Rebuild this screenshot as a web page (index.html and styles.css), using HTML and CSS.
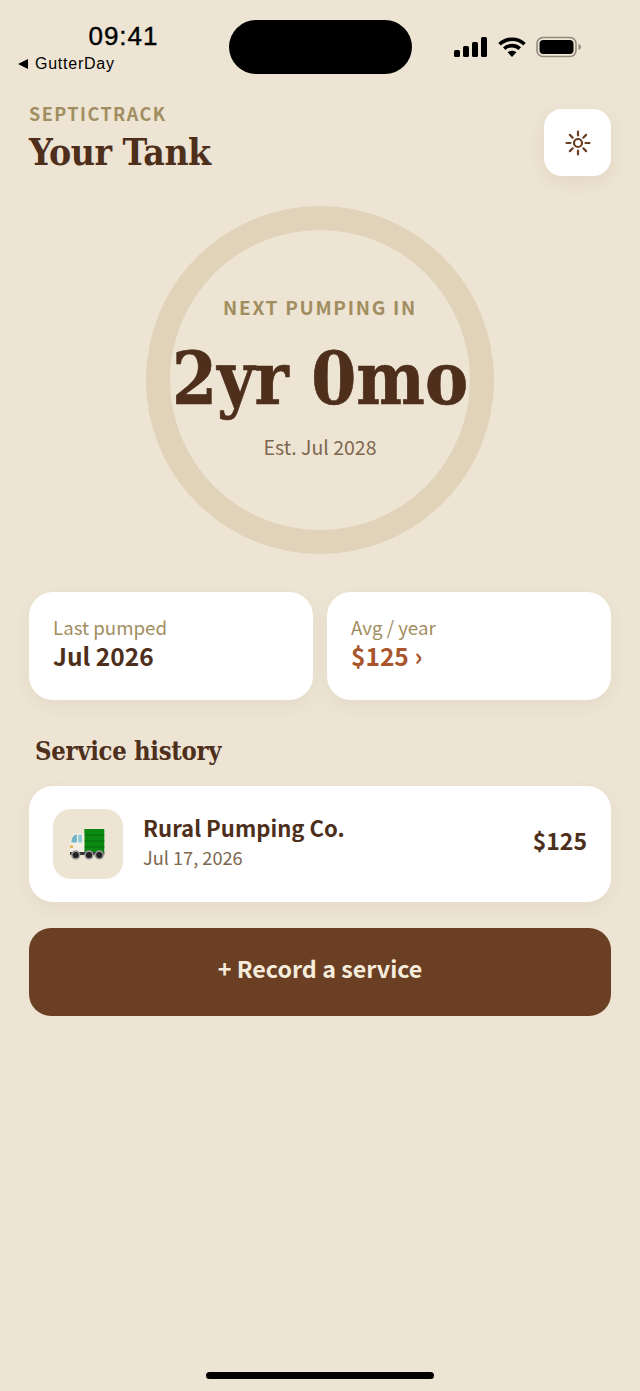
FILE: index.html
```html
<!DOCTYPE html>
<html lang="en">
<head>
  <meta charset="UTF-8">
  <meta name="viewport" content="width=device-width, initial-scale=1.0">
  <title>SepticTrack</title>
  <link rel="stylesheet" href="styles.css">
</head>
<body>
  <div class="app">
    <div class="status-bar">
      <div class="status-left">
        <div class="status-time">09:41</div>
        <div class="status-back"><span class="back-arrow"></span>GutterDay</div>
      </div>
      <div class="island"></div>
      <div class="status-right">
        <svg class="icon-signal" width="33" height="20" viewBox="0 0 33 20">
          <rect x="0" y="13" width="6" height="7" rx="1.5"/>
          <rect x="9" y="9" width="6" height="11" rx="1.5"/>
          <rect x="18" y="5" width="6" height="15" rx="1.5"/>
          <rect x="27" y="0" width="6" height="20" rx="1.5"/>
        </svg>
        <svg class="icon-wifi" width="28" height="20" viewBox="0 0 28 20" fill="none" stroke="#000" stroke-width="3.6">
          <path d="M1.5 7.2C8.5 .6 19.5 .6 26.5 7.2"/>
          <path d="M6.2 11.6C10.6 7.6 17.4 7.6 21.8 11.6"/>
          <path d="M14 20l-4.4-4.7c2.5-2 6.3-2 8.8 0z" fill="#000" stroke="none"/>
        </svg>
        <svg class="icon-battery" width="46" height="22" viewBox="0 0 46 22">
          <rect x="1" y="1.500" width="39" height="19" rx="6" fill="none" stroke="#8f8a7d" stroke-width="1.600"/>
          <rect x="3.500" y="4" width="34" height="14" rx="4" fill="#000"/>
          <path d="M42.500 8v6c1.500-.4 2.500-1.600 2.500-3s-1-2.600-2.500-3z" fill="#8f8a7d"/>
        </svg>
      </div>
    </div>

    <header class="page-head">
      <div>
        <div class="eyebrow">SEPTICTRACK</div>
        <h1 class="page-title">Your Tank</h1>
      </div>
      <button class="theme-btn">
        <svg width="28" height="28" viewBox="0 0 28 28" fill="none" stroke="#6b3f24" stroke-width="2.200" stroke-linecap="round">
          <circle cx="14" cy="14" r="4"/>
          <path d="M14 2.500v4M14 21.500v4M2.500 14h4M21.500 14h4M5.900 5.900l2.800 2.800M19.300 19.300l2.800 2.800M5.900 22.100l2.800-2.800M19.300 8.700l2.800-2.800"/>
        </svg>
      </button>
    </header>

    <section class="ring-wrap">
      <div class="ring">
        <div class="ring-label">NEXT PUMPING IN</div>
        <div class="ring-value">2yr 0mo</div>
        <div class="ring-est">Est. Jul 2028</div>
      </div>
    </section>

    <section class="stats">
      <div class="card stat">
        <div class="stat-label">Last pumped</div>
        <div class="stat-value">Jul 2026</div>
      </div>
      <div class="card stat">
        <div class="stat-label">Avg / year</div>
        <div class="stat-value accent">$125 ›</div>
      </div>
    </section>

    <h2 class="section-title">Service history</h2>

    <div class="card service-row">
      <div class="service-icon">
        <svg width="38" height="34" viewBox="0 0 38 34">
          <rect x="15.300" y="2" width="20" height="24" fill="#0b8a12"/>
          <path d="M15.300 8h20M15.300 14h20M15.300 20h20" stroke="#066a0c" stroke-width="1"/>
          <path d="M1 26v-10c0-6 3-10 7.500-10h6.800v20z" fill="#f3efe2"/>
          <path d="M2.400 15.500c0-4.500 1.800-7.500 5.500-8.300v8.300z" fill="#6fb4c8"/>
          <rect x="9.200" y="7.500" width="3.800" height="8" rx="1" fill="#8fcbd8"/>
          <rect x="1" y="18.500" width="3" height="2.500" fill="#e3b64c"/>
          <rect x="1" y="25" width="34.300" height="3" fill="#333"/>
          <g fill="#222" stroke="#9a9a9a" stroke-width="1.600">
            <circle cx="6.700" cy="28" r="3.900"/>
            <circle cx="20" cy="28" r="3.900"/>
            <circle cx="30.300" cy="28" r="3.900"/>
          </g>
        </svg>
      </div>
      <div class="service-info">
        <div class="service-name">Rural Pumping Co.</div>
        <div class="service-date">Jul 17, 2026</div>
      </div>
      <div class="service-cost">$125</div>
    </div>

    <button class="record-btn">+ Record a service</button>

    <div class="home-indicator"></div>
  </div>
</body>
</html>
```

FILE: styles.css
```css
* {
  box-sizing: border-box;
}
html, body {
  margin: 0;
  padding: 0;
  background: #ede4d3;
}
body {
  font-family: "Noto Sans CJK SC", "Noto Sans", sans-serif;
  color: #4d2f1b;
}
.app {
  width: 640px;
  height: 1391px;
  padding: 0 29px;
  position: relative;
  overflow: hidden;
}
.status-bar {
  display: flex;
  align-items: flex-start;
  height: 100px;
  margin: 0 -29px;
  padding: 20px 58px 0 18px;
  font-family: "Liberation Sans", sans-serif;
  color: #000;
}
.status-left {
  width: 211px;
}
.status-time {
  font-size: 26px;
  line-height: 32px;
  font-weight: 500;
  letter-spacing: 1px;
  text-align: center;
  -webkit-text-stroke: 0.4px #000;
}
.status-back {
  display: flex;
  align-items: center;
  font-size: 16px;
  line-height: 20px;
  margin-top: 2px;
  letter-spacing: 0.75px;
}
.back-arrow {
  width: 0;
  height: 0;
  margin-right: 7px;
  border-top: 5px solid transparent;
  border-bottom: 5px solid transparent;
  border-right: 10px solid #000;
}
.island {
  width: 183px;
  height: 54px;
  background: #000;
  border-radius: 27px;
}
.status-right {
  flex: 1;
  display: flex;
  align-items: center;
  justify-content: flex-end;
  gap: 10px;
  height: 54px;
  padding-bottom: 1px;
}
.icon-signal {
  margin-right: 1px;
}
.page-head {
  display: flex;
  justify-content: space-between;
  align-items: flex-start;
  height: 106px;
}
.eyebrow {
  font-size: 18px;
  line-height: 26px;
  font-weight: 700;
  letter-spacing: 1.45px;
  color: #a18e60;
}
.page-title {
  margin: 2px 0 0;
  font-family: "DejaVu Serif Condensed", "DejaVu Serif", serif;
  font-stretch: condensed;
  font-size: 37px;
  line-height: 48px;
  font-weight: 700;
  letter-spacing: -0.5px;
}
.theme-btn {
  width: 67px;
  height: 67px;
  margin-top: 9px;
  padding: 0;
  border: 0;
  border-radius: 18px;
  background: #fff;
  display: flex;
  align-items: center;
  justify-content: center;
  box-shadow: 0 6px 18px rgba(107, 63, 36, 0.07);
}
.ring-wrap {
  display: flex;
  justify-content: center;
  height: 386px;
}
.ring {
  width: 348px;
  height: 348px;
  border: 24px solid #e0d3b9;
  border-radius: 50%;
  display: flex;
  flex-direction: column;
  align-items: center;
  flex-shrink: 0;
  padding-top: 64px;
}
.ring-label {
  font-size: 19px;
  line-height: 26px;
  font-weight: 700;
  letter-spacing: 1.7px;
  color: #a18e60;
  white-space: nowrap;
}
.ring-value {
  margin-top: 17px;
  font-family: "DejaVu Serif Condensed", "DejaVu Serif", serif;
  font-stretch: condensed;
  font-size: 72px;
  line-height: 84px;
  font-weight: 700;
  white-space: nowrap;
  -webkit-text-stroke: 0.6px #4d2f1b;
}
.ring-est {
  margin-top: 13px;
  font-size: 19.5px;
  line-height: 26px;
  color: #7d674f;
}
.stats {
  display: flex;
  gap: 14px;
}
.card {
  background: #fff;
  box-shadow: 0 6px 18px rgba(107, 63, 36, 0.05);
}
.stat {
  flex: 1;
  height: 108px;
  border-radius: 24px;
  padding: 22px 24px;
}
.stat-label {
  font-size: 18.7px;
  line-height: 26px;
  color: #a18e60;
}
.stat-value {
  font-size: 24.500px;
  line-height: 32px;
  font-weight: 700;
}
.stat-value.accent {
  color: #a9562d;
}
.section-title {
  margin: 33px 0 16px 6px;
  font-family: "DejaVu Serif Condensed", "DejaVu Serif", serif;
  font-stretch: condensed;
  font-size: 25.4px;
  line-height: 37px;
  font-weight: 700;
  letter-spacing: -0.3px;
}
.service-row {
  display: flex;
  align-items: center;
  height: 116px;
  border-radius: 24px;
  padding: 0 24px;
}
.service-icon {
  width: 70px;
  height: 70px;
  border-radius: 18px;
  background: #ede4d3;
  display: flex;
  align-items: center;
  justify-content: center;
  flex-shrink: 0;
  margin-right: 20px;
}
.service-info {
  flex: 1;
  padding-bottom: 6px;
}
.service-name {
  font-size: 22.1px;
  line-height: 30px;
  font-weight: 700;
}
.service-date {
  font-size: 18.2px;
  line-height: 26px;
  margin-top: 2px;
  color: #7d674f;
}
.service-cost {
  font-size: 23px;
  font-weight: 700;
  padding-bottom: 8px;
}
.record-btn {
  display: block;
  width: 100%;
  height: 88px;
  margin-top: 26px;
  padding: 0 0 8px;
  border: 0;
  border-radius: 22px;
  background: #6b3f24;
  color: #f5ecdc;
  font-family: inherit;
  font-size: 23.3px;
  font-weight: 700;
}
.home-indicator {
  position: absolute;
  left: 206px;
  bottom: 12px;
  width: 228px;
  height: 7px;
  border-radius: 4px;
  background: #000;
}
```
